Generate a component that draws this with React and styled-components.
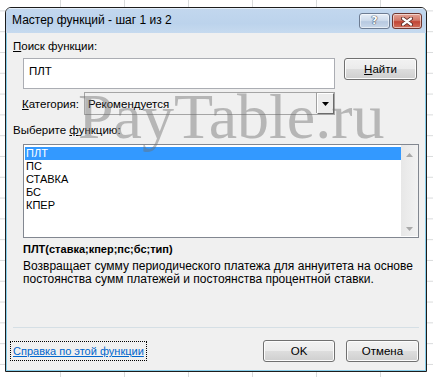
import styled, { createGlobalStyle } from "styled-components";

const GlobalStyle = createGlobalStyle`
  html, body {
    margin: 0;
    padding: 0;
  }
  body {
    width: 433px;
    height: 377px;
    overflow: hidden;
    font-family: "Liberation Sans", Arial, sans-serif;
    font-size: 11.5px;
    color: #000;
    background-color: #fff;
    background-image:
      linear-gradient(to right, #d9dbdc 1px, transparent 1px),
      linear-gradient(to bottom, #d9dbdc 1px, transparent 1px);
    background-size: 64px 100%, 100% 20.8px;
    background-position: 60px 0, 0 10.4px;
  }
`;

const Window = styled.div`
  position: relative;
  margin: 7px 0 0 5px;
  width: 422px;
  height: 365px;
  box-sizing: border-box;
  border: 1px solid #1d1d1d;
  border-radius: 6px 6px 0 0;
  display: flex;
  flex-direction: column;
  overflow: hidden;
  background: #f0f0f0;
`;

const TitleBar = styled.div`
  height: 24px;
  flex-shrink: 0;
  display: flex;
  align-items: flex-start;
  padding: 0 4px 0 6px;
  background: linear-gradient(to bottom, #c2d7ee, #bcd3ec 60%, #c6daef);
  border-top: 1px solid #e4eef9;
`;

const Title = styled.div`
  flex: 1;
  font-size: 12px;
  line-height: 22px;
  color: #000;
`;

const CaptionButtons = styled.div`
  display: flex;
  gap: 2px;
  margin-top: 4px;
`;

const CaptionButton = styled.div`
  width: ${(p) => p.$w}px;
  height: 16px;
  box-sizing: border-box;
  border: 1px solid ${(p) => (p.$close ? "#6e3730" : "#6d7c92")};
  border-radius: 3px;
  box-shadow: inset 0 0 0 1px rgba(255, 255, 255, 0.55);
  background: ${(p) =>
    p.$close
      ? "linear-gradient(to bottom, #e3a395, #d27a6a 45%, #c24434 55%, #d0705c)"
      : "linear-gradient(to bottom, #e6eef8, #cfdcec 45%, #b7c9e0 55%, #c9d8ea)"};
  display: flex;
  align-items: center;
  justify-content: center;
`;

const HelpGlyph = styled.span`
  font-family: "DejaVu Sans", sans-serif;
  font-weight: bold;
  font-size: 11px;
  line-height: 12px;
  color: #fff;
  text-shadow: 0 0 1px #3b4a60, 0 0 1px #3b4a60, 0 0 1px #3b4a60;
`;

const Frame = styled.div`
  flex: 1;
  display: flex;
  flex-direction: column;
  border: 1px solid #86cde9;
  border-top: none;
  padding: 6px 4px 8px 6px;
`;

const Label = styled.div`
  line-height: 15px;
  white-space: nowrap;
`;

const Key = styled.span`
  text-decoration: underline;
`;

const SearchRow = styled.div`
  display: flex;
  align-items: flex-start;
  gap: 9px;
  margin: 4px 0 0 10px;
`;

const SearchInput = styled.div`
  width: 312px;
  height: 31px;
  box-sizing: border-box;
  border: 1px solid #abadb3;
  background: #fff;
  padding: 5px 0 0 5px;
  line-height: 14px;
`;

const PushButton = styled.div`
  width: ${(p) => p.$w || 73}px;
  height: 22px;
  box-sizing: border-box;
  border: 1px solid #707070;
  border-radius: 3px;
  box-shadow: inset 0 0 0 1px #fcfcfc;
  background: linear-gradient(to bottom, #f2f2f2, #ebebeb 50%, #dddddd 51%, #cfcfcf);
  display: flex;
  align-items: center;
  justify-content: center;
  line-height: 14px;
`;

const CategoryRow = styled.div`
  display: flex;
  align-items: center;
  margin: 3px 0 0 9px;
  height: 23px;
`;

const CategoryLabel = styled.div`
  width: 62px;
`;

const Select = styled.div`
  width: 251px;
  height: 23px;
  box-sizing: border-box;
  border: 1px solid #a5a5a5;
  display: flex;
  align-items: center;
  justify-content: space-between;
  padding-left: 3px;
`;

const DropButton = styled.div`
  width: 17px;
  height: 21px;
  box-sizing: border-box;
  border: 1px solid #6b6b6b;
  border-top-color: #fff;
  border-left-color: #fff;
  box-shadow: -1px -1px 0 #a0a0a0;
  background: #ececec;
  display: flex;
  align-items: center;
  justify-content: center;
`;

const ListLabel = styled(Label)`
  margin-top: 8px;
`;

const ListBox = styled.div`
  margin: 6px 0 0 10px;
  width: 396px;
  height: 94px;
  box-sizing: border-box;
  border: 1px solid #828790;
  background: #fff;
  display: flex;
  padding: 2px 0 1px 1px;
`;

const Rows = styled.div`
  flex: 1;
`;

const Row = styled.div`
  height: 13px;
  line-height: 13px;
  padding-left: 1px;
  font-size: 11px;
  color: ${(p) => (p.$active ? "#fff" : "#000")};
  background: ${(p) => (p.$active ? "#3399ff" : "transparent")};
`;

const ScrollBar = styled.div`
  width: 17px;
  margin-top: -2px;
  background: linear-gradient(to right, #e7e7e7, #f2f2f2);
  display: flex;
  flex-direction: column;
  justify-content: space-between;
  align-items: center;
  padding: 8px 0 5px;
`;

const Syntax = styled.div`
  margin: 4px 0 0 10px;
  font-weight: bold;
  font-size: 11px;
  line-height: 14px;
`;

const Description = styled.div`
  margin: 4px 0 0 10px;
  line-height: 13px;
  font-size: 12px;
`;

const Separator = styled.div`
  margin-top: auto;
  height: 1px;
  width: 406px;
  background: #d5dfe5;
`;

const Footer = styled.div`
  display: flex;
  align-items: center;
  margin-top: 12px;
  height: 22px;
  padding-right: 2px;
`;

const HelpLink = styled.a`
  color: #0066cc;
  font-size: 11px;
  text-decoration: underline;
  outline: 1px dotted #000;
  outline-offset: 2px;
  line-height: 14px;
  margin-right: auto;
`;

const FooterButtons = styled.div`
  display: flex;
  gap: 11px;
`;

const Watermark = styled.div`
  position: absolute;
  left: 72px;
  top: 74px;
  font-family: "Liberation Serif", "Times New Roman", serif;
  font-size: 64px;
  line-height: 70px;
  color: rgba(110, 110, 110, 0.45);
  pointer-events: none;
  white-space: nowrap;
`;

const Tri = ({ down, color }) => (
  <svg width="7" height="4" viewBox="0 0 7 4">
    <path d={down ? "M0 0 H7 L3.5 4 Z" : "M0 4 H7 L3.5 0 Z"} fill={color} />
  </svg>
);

const functions = ["ПЛТ", "ПС", "СТАВКА", "БС", "КПЕР"];

const App = () => {
  return (
    <>
      <GlobalStyle />
      <Window>
        <TitleBar>
          <Title>Мастер функций - шаг 1 из 2</Title>
          <CaptionButtons>
            <CaptionButton $w={31}>
              <HelpGlyph>?</HelpGlyph>
            </CaptionButton>
            <CaptionButton $w={30} $close>
              <svg width="12" height="9" viewBox="0 0 12 9">
                <path d="M2 1.5 L10 7.5 M10 1.5 L2 7.5" stroke="#5a2a24" strokeWidth="4" strokeLinecap="round" />
                <path d="M2 1.5 L10 7.5 M10 1.5 L2 7.5" stroke="#fff" strokeWidth="2.2" strokeLinecap="round" />
              </svg>
            </CaptionButton>
          </CaptionButtons>
        </TitleBar>
        <Frame>
          <Label>
            <Key>П</Key>оиск функции:
          </Label>
          <SearchRow>
            <SearchInput>ПЛТ</SearchInput>
            <PushButton>
              <span>
                <Key>Н</Key>айти
              </span>
            </PushButton>
          </SearchRow>
          <CategoryRow>
            <CategoryLabel>
              <Key>К</Key>атегория:
            </CategoryLabel>
            <Select>
              <span>Рекомендуется</span>
              <DropButton>
                <Tri down color="#000" />
              </DropButton>
            </Select>
          </CategoryRow>
          <ListLabel>
            Выберите <Key>ф</Key>ункцию:
          </ListLabel>
          <ListBox>
            <Rows>
              {functions.map((f, i) => (
                <Row key={f} $active={i === 0}>
                  {f}
                </Row>
              ))}
            </Rows>
            <ScrollBar>
              <Tri color="#a9a9a9" />
              <Tri down color="#a9a9a9" />
            </ScrollBar>
          </ListBox>
          <Syntax>ПЛТ(ставка;кпер;пс;бс;тип)</Syntax>
          <Description>
            Возвращает сумму периодического платежа для аннуитета на основе
            <br />
            постоянства сумм платежей и постоянства процентной ставки.
          </Description>
          <Separator />
          <Footer>
            <HelpLink>Справка по этой функции</HelpLink>
            <FooterButtons>
              <PushButton $w={72}>OK</PushButton>
              <PushButton>Отмена</PushButton>
            </FooterButtons>
          </Footer>
        </Frame>
        <Watermark>PayTable.ru</Watermark>
      </Window>
    </>
  );
};

export default App;
